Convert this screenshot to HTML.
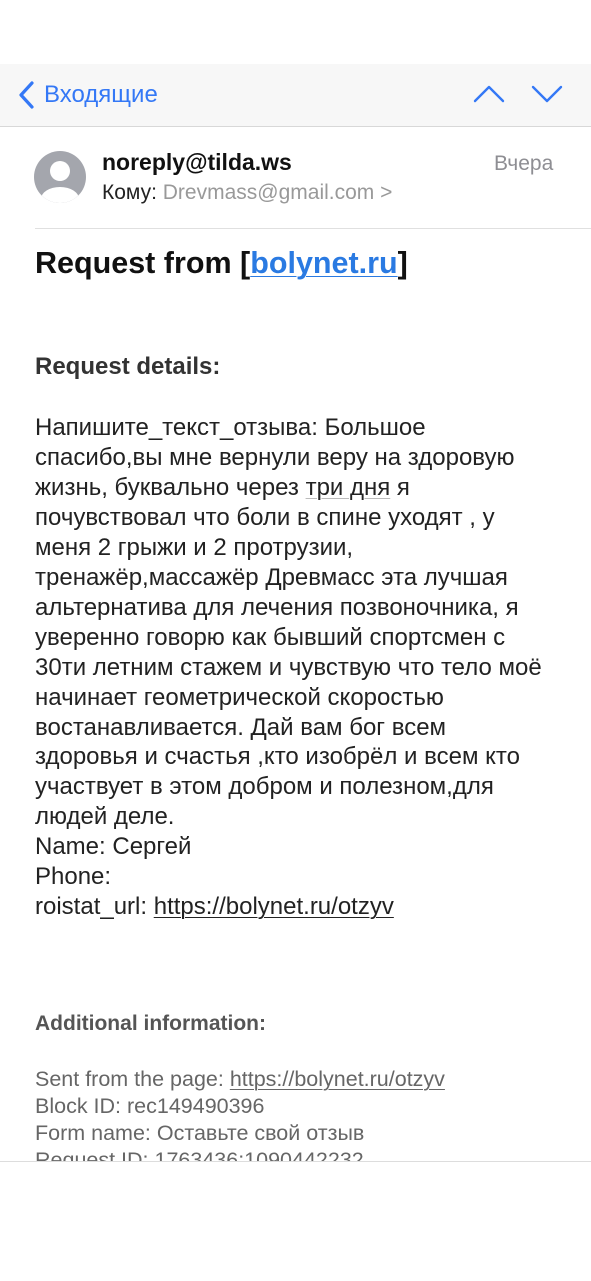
<!DOCTYPE html>
<html><head><meta charset="utf-8"><style>
body{margin:0;width:591px;height:1280px;background:#fff;position:relative;overflow:hidden;font-family:"Liberation Sans",Arial,sans-serif;}
.a{position:absolute;white-space:nowrap;}
.bar{position:absolute;left:0;top:64px;width:591px;height:62px;background:#f7f7f7;border-bottom:1px solid #d8d8d8;}
.b{font-size:24px;color:#222;line-height:29.95px;}
.s{font-size:21.5px;color:#666;line-height:27px;}
u{text-decoration-thickness:1px;text-underline-offset:3px;}
</style></head><body>
<div class="bar"></div>
<svg class="a" style="left:16px;top:80px" width="22" height="30" viewBox="0 0 22 30"><path d="M16 3 L5 15 L16 27" fill="none" stroke="#3478f6" stroke-width="3.2" stroke-linecap="round" stroke-linejoin="round"/></svg>
<div class="a" style="left:44px;top:81px;font-size:24px;color:#3478f6">Входящие</div>
<svg class="a" style="left:472px;top:82px" width="34" height="24" viewBox="0 0 34 24"><path d="M3 19 L17 5 L31 19" fill="none" stroke="#3478f6" stroke-width="2.4" stroke-linecap="round" stroke-linejoin="round"/></svg>
<svg class="a" style="left:530px;top:82px" width="34" height="24" viewBox="0 0 34 24"><path d="M3 5 L17 19 L31 5" fill="none" stroke="#3478f6" stroke-width="2.4" stroke-linecap="round" stroke-linejoin="round"/></svg>
<svg class="a" style="left:33px;top:150px" width="54" height="54" viewBox="0 0 54 54"><defs><clipPath id="c"><circle cx="27" cy="27" r="26"/></clipPath></defs><circle cx="27" cy="27" r="26" fill="#a4a6ad"/><g clip-path="url(#c)" fill="#fff"><circle cx="27" cy="21" r="10"/><ellipse cx="27" cy="49" rx="19" ry="12"/></g></svg>
<div class="a" style="left:102px;top:149px;font-size:23px;font-weight:bold;color:#111">noreply@tilda.ws</div>
<div class="a" style="left:102px;top:181px;font-size:21px;color:#222">Кому: <span style="color:#999">Drevmass@gmail.com &gt;</span></div>
<div class="a" style="left:494px;top:152px;font-size:21px;color:#8e8e93">Вчера</div>
<div class="a" style="left:35px;top:228px;width:556px;height:1px;background:#e0e0e0"></div>
<div class="a" style="left:35px;top:246px;font-size:30.5px;font-weight:bold;color:#111">Request from [<u style="color:#2a7ae2">bolynet.ru</u>]</div>
<div class="a b" style="left:35px;top:352px;font-weight:bold;color:#333">Request details:</div>
<div class="a b" style="left:35px;top:413px">Напишите_текст_отзыва: Большое<br>спасибо,вы мне вернули веру на здоровую<br>жизнь, буквально через <u style="text-decoration-color:#bbb">три дня</u> я<br>почувствовал что боли в спине уходят , у<br>меня 2 грыжи и 2 протрузии,<br>тренажёр,массажёр Древмасс эта лучшая<br>альтернатива для лечения позвоночника, я<br>уверенно говорю как бывший спортсмен с<br>30ти летним стажем и чувствую что тело моё<br>начинает геометрической скоростью<br>востанавливается. Дай вам бог всем<br>здоровья и счастья ,кто изобрёл и всем кто<br>участвует в этом добром и полезном,для<br>людей деле.<br>Name: Сергей<br>Phone:<br>roistat_url: <u>https://bolynet.ru/otzyv</u></div>
<div class="a" style="left:35px;top:1012px;font-size:21px;font-weight:bold;color:#555">Additional information:</div>
<div class="a s" style="left:35px;top:1066px;height:95px;overflow:hidden">Sent from the page: <u>https://bolynet.ru/otzyv</u><br>Block ID: rec149490396<br>Form name: Оставьте свой отзыв<br>Request ID: 1763436:1090442232</div>
<div class="a" style="left:0;top:1161px;width:591px;height:119px;background:#fff;border-top:1px solid #ddd"></div>
</body></html>
